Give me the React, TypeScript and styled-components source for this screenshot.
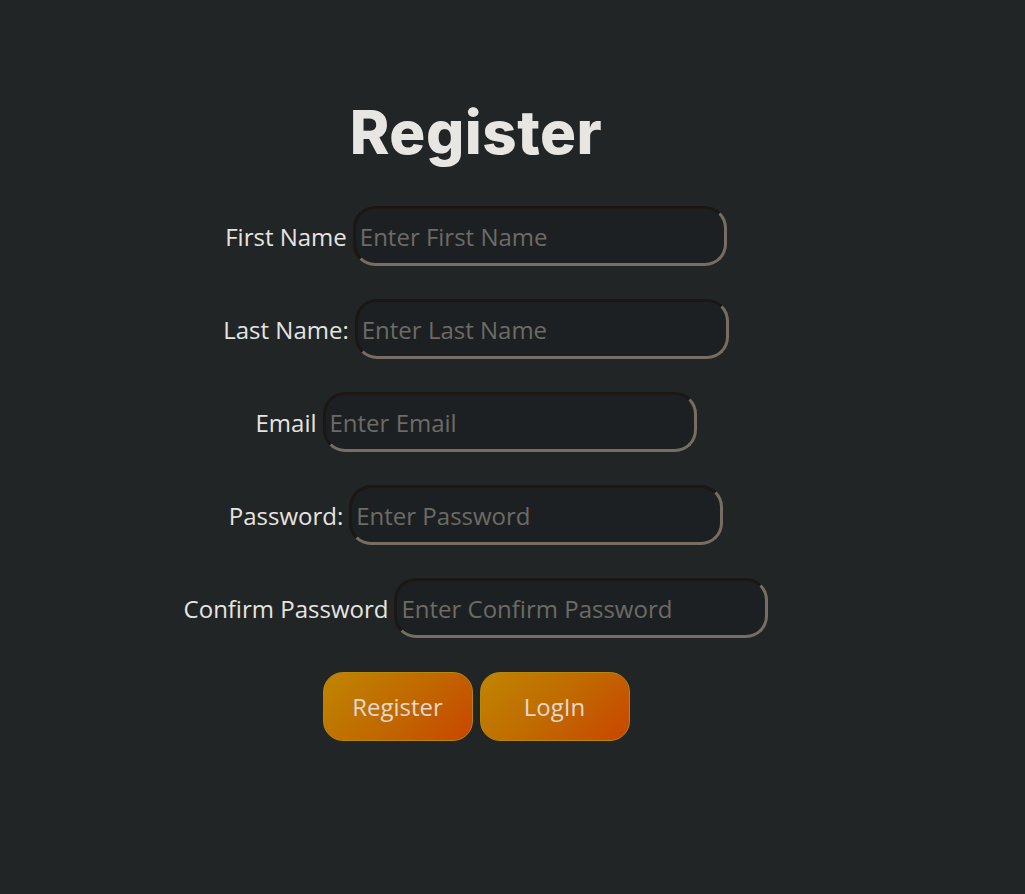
import React from "react";
import styled, { createGlobalStyle } from "styled-components";

const Global = createGlobalStyle`
  html, body { margin: 0; padding: 0; background: #212526; }
  body { font-family: "Open Sans", "Noto Sans", sans-serif; }
  input::placeholder { color: #6c6b66; opacity: 1; }
`;

const Page = styled.div`
  width: 952px;
  min-height: 894px;
  display: flex;
  flex-direction: column;
  align-items: center;
  padding-top: 92px;
  box-sizing: border-box;
`;

const Title = styled.h1`
  margin: 0 0 34px;
  font-family: Inter, "Noto Sans", sans-serif;
  font-weight: 800;
  font-size: 60px;
  line-height: 80px;
  letter-spacing: 0.5px;
  color: #e8e6e2;
`;

const Form = styled.form`
  display: flex;
  flex-direction: column;
  align-items: center;
  gap: 33px;
`;

const Row = styled.div`
  display: flex;
  align-items: center;
  gap: 6px;
`;

const Label = styled.label`
  font-size: 24px;
  color: #e6e4e0;
  white-space: nowrap;
`;

const Input = styled.input`
  box-sizing: border-box;
  width: 374px;
  height: 60px;
  padding: 0 4px;
  border-radius: 22px;
  border-style: solid;
  border-width: 3px;
  border-color: #1a1715 #776d62 #776d62 #1a1715;
  background: #1d2022;
  color: #e6e4e0;
  font-family: "Open Sans", "Noto Sans", sans-serif;
  font-size: 24px;
  outline: none;
`;

const Buttons = styled.div`
  display: flex;
  gap: 7px;
  margin-top: 1px;
`;

const Button = styled.button`
  width: 150px;
  height: 69px;
  border-radius: 20px;
  border: 1px solid #b8860b;
  background: linear-gradient(135deg, #c08500 0%, #c06a00 50%, #c94600 100%);
  color: #e2d8cf;
  font-family: "Open Sans", "Noto Sans", sans-serif;
  font-size: 24px;
  cursor: pointer;
`;

const fields = [
  { label: "First Name", placeholder: "Enter First Name", type: "text" },
  { label: "Last Name:", placeholder: "Enter Last Name", type: "text" },
  { label: "Email", placeholder: "Enter Email", type: "email" },
  { label: "Password:", placeholder: "Enter Password", type: "password" },
  { label: "Confirm Password", placeholder: "Enter Confirm Password", type: "password" },
];

export default function App() {
  return (
    <>
      <Global />
      <Page>
        <Title>Register</Title>
        <Form onSubmit={(e) => e.preventDefault()}>
          {fields.map((f) => (
            <Row key={f.label}>
              <Label>{f.label}</Label>
              <Input type={f.type} placeholder={f.placeholder} />
            </Row>
          ))}
          <Buttons>
            <Button type="submit">Register</Button>
            <Button type="button">LogIn</Button>
          </Buttons>
        </Form>
      </Page>
    </>
  );
}
